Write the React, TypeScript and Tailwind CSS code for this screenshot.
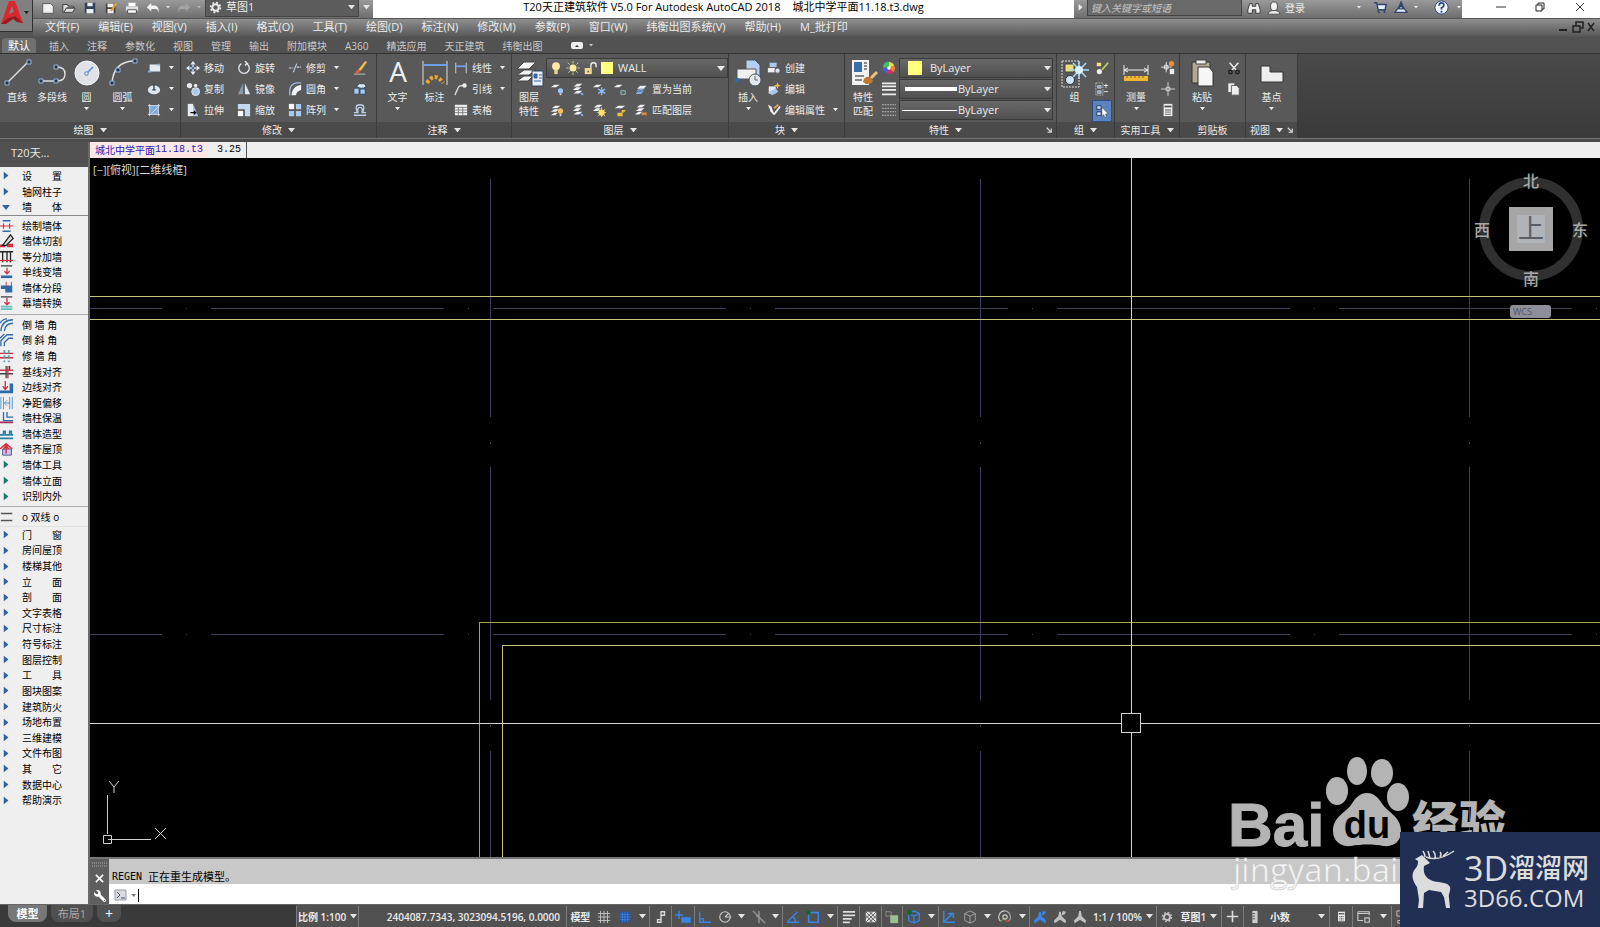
import React from "react";
import { FaWrench } from "react-icons/fa";

const blue = "#a9c8ee";

// 16x16 drawings used in the ribbon, the title bar and the status bar
const icons: Record<string, React.ReactNode> = {
  newFile: <path d="M2 3h9l3 3v8H2z" fill="#f2f2f2" stroke="#555" />,
  open: <path d="M1 13V4h5l1 2h6v2H5l-3 5h10l3-5H5" fill="#ddd" stroke="#333" />,
  save: (
    <g>
      <path d="M2 2h12v12H2z" fill="#33415c" />
      <path d="M5 2h6v4H5zM4 9h8v5H4z" fill="#eee" />
    </g>
  ),
  saveAs: (
    <g>
      <path d="M2 3h11v11H2z" fill="#444" />
      <path d="M4 3h7v4H4zM4 9h7v5H4z" fill="#eee" />
      <path d="M7 11l6-9 2 1-6 9z" fill="#f0a030" />
    </g>
  ),
  print: (
    <g>
      <path d="M4 2h8v4H4z" fill="#fff" />
      <path d="M1 6h14v5H1z" fill="#ddd" />
      <path d="M3 10h10v4H3z" fill="#fff" stroke="#444" />
    </g>
  ),
  undo: <path d="M6 2L1 7l5 5V9h5q3 0 3 5 2-8-4-9H6z" fill="#f2f2f2" />,
  redo: <path d="M10 2l5 5-5 5V9H5q-3 0-3 5-2-8 4-9h4z" fill="#a4a4a4" />,
  gear: (
    <g fill="none" stroke="currentColor">
      <circle cx="8" cy="8" r="4" strokeWidth="2.5" />
      <circle cx="8" cy="8" r="6" strokeWidth="2" strokeDasharray="2.4 2.31" />
    </g>
  ),
  rect: (
    <g>
      <path d="M3 4h12v8H3z" fill="#e4eaf2" />
      <path d="M1 12h4M12 4h3" stroke="#7fb0e8" strokeWidth="2" />
    </g>
  ),
  ellipse: (
    <g>
      <ellipse cx="8" cy="9" rx="7" ry="5" fill="#dfe6ee" />
      <path d="M6 9h4M8 2v7" stroke="#345" strokeWidth="1.5" />
    </g>
  ),
  hatchBox: (
    <g>
      <path d="M3 3h10v10H3z" fill="#7fa8dc" />
      <path d="M1 3h14M1 13h14M3 1v14M13 1v14M5 12l7-7" stroke="#dbe8f8" />
    </g>
  ),
  move: (
    <g>
      <path d="M8 0l3 4H5zM8 16l3-4H5zM0 8l4-3v6zM16 8l-4-3v6z" fill="#e8eef6" />
      <path d="M8 4v3M8 9v3M4 8h3M9 8h3" stroke={blue} strokeWidth="2" />
    </g>
  ),
  rotate: (
    <g fill="none" stroke="#dfe6ee" strokeWidth="1.5">
      <path d="M10 2.500A6 6 0 1 1 5 3" />
      <path d="M9 0l3 3-3 2" />
    </g>
  ),
  trim: (
    <g stroke="#d8d8d8" strokeWidth="1.4">
      <path d="M1 8h5M10 7h5" strokeDasharray="3 1" />
      <path d="M6 13L10 3" stroke={blue} />
    </g>
  ),
  erase: (
    <g>
      <path d="M6 10l8-10 2 1-7 10z" fill="#f0c050" />
      <path d="M2 13l4-4 3 2-3 3z" fill="#e06040" />
      <path d="M1 15h13" stroke="#ccc" />
    </g>
  ),
  copy: (
    <g fill="#e8ebf0">
      <circle cx="4" cy="4" r="3" />
      <circle cx="11" cy="4" r="2" />
      <circle cx="11" cy="11" r="4.500" fill={blue} stroke="#eee" />
    </g>
  ),
  mirror: (
    <g>
      <path d="M7 1v13H1z" fill="#8899aa" />
      <path d="M9 1v13h6z" fill="#dbe8f8" />
    </g>
  ),
  fillet: (
    <g>
      <path d="M2 15V9q1-7 8-8h5" fill="none" stroke="#9cb8dc" strokeWidth="1.500" />
      <path d="M4 15q0-10 11-12v6q-5 1-6 6z" fill="#f0f2f5" />
    </g>
  ),
  explode: (
    <g stroke="#345">
      <path d="M1 7h6v7H1zM8 8h6v6H8z" fill={blue} />
      <path d="M4 5l3-3h6l2 3-3 2H8z" fill="#dbe8f8" />
    </g>
  ),
  stretch: (
    <g>
      <path d="M2 1h6v14H2z" fill="#e8ebf0" />
      <path d="M8 1l6 14H8z" fill={blue} />
      <path d="M5 11h6l-2-2m2 2l-2 2" stroke="#111" fill="none" strokeWidth="1.500" />
    </g>
  ),
  scale: (
    <g>
      <path d="M1 1h14v14H9V7H1z" fill="#c5d7ee" />
      <path d="M1 9h6v6H1z" fill="#fff" />
    </g>
  ),
  array: (
    <g>
      <path d="M1 1h6v6H1z" fill="#fff" />
      <path d="M9 1h6v6H9zM1 9h6v6H1zM9 9h6v6H9z" fill={blue} />
    </g>
  ),
  offset: (
    <path d="M1 14h14M1 11h4q-4-9 3-9t3 9h4M6 11q-2-6 2-6t2 6" fill="none" stroke="#b8cfee" strokeWidth="1.500" />
  ),
  dimLinear: (
    <g stroke="#ddd">
      <path d="M2 2v12M14 2v12" />
      <path d="M2 6h12" stroke="#6ca0ee" strokeWidth="2" />
    </g>
  ),
  leader: (
    <g>
      <path d="M1 15L5 6q1-2 6-2" fill="none" stroke="#ddd" strokeWidth="1.500" />
      <circle cx="12" cy="4" r="2.500" fill="#eee" />
    </g>
  ),
  table: (
    <g>
      <path d="M1 2h14v12H1z" fill="#f0f0f0" />
      <path d="M1 5h14M1 8h14M1 11h14M5 5v9M10 5v9" stroke="#777" />
    </g>
  ),
  layerBulb: (
    <g>
      <path d="M1 6l4-3h6l-4 3z" fill="#f0f0f0" />
      <circle cx="12" cy="10" r="3" fill="#9cc4f4" />
      <path d="M11 13h2v2h-2z" fill="#ddd" />
    </g>
  ),
  layerStack: (
    <g fill="#f0f0f0">
      <path d="M3 5l4-3h6L9 5zM2 9l4-3h6L8 9zM3 13l4-3h6l-4 3z" />
      <path d="M10 11l5 3-3 1z" fill="#7fb0f0" />
    </g>
  ),
  layerFreeze: (
    <g>
      <path d="M1 6l4-3h6L7 6z" fill="#f0f0f0" />
      <path d="M11 6v9M7 8l8 5M15 8l-8 5" stroke="#8fc0ff" strokeWidth="1.500" />
    </g>
  ),
  layerLock: (
    <g>
      <path d="M1 6l4-3h6L7 6z" fill="#f0f0f0" />
      <path d="M9 10h5v4H9z" fill="none" stroke="#9cc" />
    </g>
  ),
  layerCurrent: (
    <g stroke="#345" strokeWidth="0.500">
      <path d="M1 14l4-4h7l-4 4zM2 11l4-4h7l-4 4z" fill="#8fb8ee" />
      <path d="M3 8l4-4h8l-4 4z" fill="#f0f0f0" />
    </g>
  ),
  layerOn: (
    <g fill="#f0f0f0">
      <path d="M2 6l4-3h6L8 6zM1 10l4-3h5l-3 3zM1 14l4-3h4l-3 3z" />
      <circle cx="12" cy="9" r="3" fill="#f4c060" />
      <path d="M11 12h2v3h-2z" fill="#ddd" />
    </g>
  ),
  layerSun: (
    <g>
      <path d="M2 5l4-3h6L8 5zM1 9l4-3h5L7 9z" fill="#f0f0f0" />
      <circle cx="11" cy="11" r="3.500" fill="#ffe070" />
      <path d="M11 5v11M6 11h10M7 7l8 8M15 7l-8 8" stroke="#ffe070" />
    </g>
  ),
  layerUnlock: (
    <g>
      <path d="M2 6l4-3h8l-4 3z" fill="#f0f0f0" />
      <path d="M5 11h6v4H5zM10 11V8h4v2h-2v1z" fill="#f0c040" />
    </g>
  ),
  layerMatch: (
    <g>
      <path d="M3 5l4-3h6L9 5zM2 9l4-3h6L8 9zM1 13l4-3h5l-4 3z" fill="#f0f0f0" />
      <path d="M8 10l3 1 3-1 1 4H9z" fill="#d08840" />
    </g>
  ),
  bulb: (
    <g>
      <circle cx="8" cy="6" r="4.500" fill="#ffe9a0" />
      <path d="M6 10h4v5H6z" fill="#e8d090" />
    </g>
  ),
  sun: (
    <g>
      <circle cx="8" cy="8" r="4" fill="#ffe9a0" />
      <path d="M8 0v16M0 8h16M2 2l12 12M14 2L2 14" stroke="#d8cfa0" strokeDasharray="3 10 3" />
    </g>
  ),
  unlock: (
    <g>
      <path d="M2 8h8v7H2z" fill="#f4dc90" />
      <path d="M9 8V5q0-3 3-3t3 3v2" fill="none" stroke="#eee" strokeWidth="1.500" />
      <path d="M5 11h2v2H5z" fill="#665" />
    </g>
  ),
  blockCreate: (
    <g>
      <path d="M3 2h8v5H3z" fill={blue} />
      <path d="M1 8h8v5H1z" fill="#eee" />
      <circle cx="12" cy="11" r="3" fill="#dde4ee" stroke="#456" />
    </g>
  ),
  blockEdit: (
    <g>
      <path d="M2 5h8v8H2z" fill="#e8ebf0" />
      <path d="M1 12l5 3 7-4-3-4z" fill={blue} />
      <path d="M12 0l1 3 3 1-3 1-1 3-1-3-3-1 3-1z" fill="#f8c040" />
    </g>
  ),
  blockAttr: (
    <g>
      <path d="M1 2l4 2 3 8-4-3z" fill="#eee" />
      <path d="M8 13L4 8M8 13l7-9" stroke="#f0f0f0" strokeWidth="2" />
      <path d="M8 6l5-4" stroke="#e8a050" strokeWidth="2" />
    </g>
  ),
  wheel: (
    <g>
      <path d="M8 8L8 1a7 7 0 0 1 6 4z" fill="#e8e050" />
      <path d="M8 8l6-3a7 7 0 0 1-1 8z" fill="#f08030" />
      <path d="M8 8l5 5a7 7 0 0 1-8 1z" fill="#d03060" />
      <path d="M8 8l-3 6a7 7 0 0 1-4-7z" fill="#4060e0" />
      <path d="M8 8L1 7a7 7 0 0 1 7-6z" fill="#40c060" />
      <circle cx="8" cy="8" r="2" fill="#fff" />
    </g>
  ),
  lineWeight: <path d="M0 1.500h16M0 5h16M0 9h16M0 14h16" stroke="#eee" strokeWidth="2" />,
  lineType: <path d="M0 2h16M0 6h16M0 10h16M0 14h16" stroke="#ccc" strokeDasharray="2 1" />,
  groupEdit: (
    <g>
      <path d="M2 2h5v4H2z" fill="#eee080" />
      <circle cx="5" cy="12" r="3" fill="#eee" />
      <path d="M8 10l7-8" stroke="#c8d060" strokeWidth="2" />
    </g>
  ),
  groupAdd: (
    <g fill="none" stroke="#bbb">
      <path d="M1 1h8v14H1z" strokeDasharray="2 1" />
      <path d="M3 4h4v3H3zM3 10h4v3H3z" fill="#88a8d8" />
      <path d="M10 4h5M12.500 2v5M10 11h5" stroke="#eee" />
    </g>
  ),
  groupSelect: (
    <g>
      <path d="M2 2h5v4H2zM2 9h5v4H2z" fill="#cfe0f8" stroke="#234" />
      <path d="M8 4l7 7-3 .5 1 3-2 .5-1-3-2 2z" fill="#fff" stroke="#234" strokeWidth=".5" />
    </g>
  ),
  quickSelect: (
    <g>
      <path d="M6 1v12M0 7h12" stroke="#eee" />
      <path d="M4 5h4v4H4z" fill="none" stroke="#eee" />
      <circle cx="12" cy="3" r="3" fill="#f09030" />
      <path d="M10 9h5v6h-5z" fill="#eee" />
    </g>
  ),
  point: (
    <g stroke="#ddd" fill="none">
      <path d="M8 0v16M0 8h16" />
      <path d="M6 6h4v4H6z" fill="#999" />
    </g>
  ),
  calc: (
    <g>
      <path d="M3 1h10v14H3z" fill="#eee" />
      <path d="M4 4h8" stroke="#555" strokeWidth="2" />
      <path d="M5 8h6M5 10.500h6M5 13h6" stroke="#555" strokeDasharray="1.500 .8" strokeWidth="1.500" />
    </g>
  ),
  cut: (
    <g stroke="#eee" strokeWidth="1.700" fill="none">
      <path d="M3 2l8 9M13 2l-8 9" />
      <circle cx="4" cy="12.500" r="2" stroke="#222" />
      <circle cx="12" cy="12.500" r="2" stroke="#222" />
    </g>
  ),
  pages: (
    <g fill="#eee" stroke="#555">
      <path d="M1 1h8v11H1z" />
      <path d="M5 4h6l3 3v8H5z" />
    </g>
  ),
  binoculars: (
    <path d="M3 3h3v3h4V3h3l2 7v4h-5v-4H6v4H1v-4z" fill="#eee" stroke="#333" />
  ),
  person: (
    <g fill="#f0f0f0" stroke="#444">
      <path d="M1 15q1-4 5-4h4q4 0 5 4z" />
      <ellipse cx="8" cy="6" rx="4" ry="5" />
    </g>
  ),
  cart: (
    <g>
      <path d="M4 4h10l-1 6H6z" fill="#e8eef8" />
      <path d="M1 2h3l2 8h8l1-6H5M6 13h2M12 13h2M6 10v3M13 10v3" fill="none" stroke="#32466e" strokeWidth="1.600" />
    </g>
  ),
  a360: <path d="M8 1l3 7 4 5H1l4-5zM8 4l2 5H6z" fill="#e8eef8" stroke="#32466e" strokeWidth="1.500" />,
  help: (
    <g>
      <circle cx="8" cy="8" r="7" fill="#f4f6fa" stroke="#2c4a86" />
      <path d="M5.500 6q0-3 2.500-3t2.500 2.200T8 8.500V10M8 11.500v2" fill="none" stroke="#2c4a86" strokeWidth="2" />
    </g>
  ),
  // status bar
  grid: <path d="M4 1v14M8 1v14M12 1v14M1 4h14M1 8h14M1 12h14" stroke="#c8c8c8" />,
  snap: (
    <g>
      <path d="M2 2h12v12H2z" fill="#24509a" />
      <path d="M5 2v12M8 2v12M11 2v12M2 5h12M2 8h12M2 11h12" stroke="#3f7fe0" />
    </g>
  ),
  infer: <path d="M8 2h4v4H8zM8 4v9M4 11h4v3H4z" fill="none" stroke="#ddd" strokeWidth="1.500" />,
  dyn: <path d="M4 2v8M0 6h8M7 9h8v4H7z" fill="#3a86e8" stroke="#3a86e8" strokeWidth="1.500" />,
  ortho: <path d="M2 2v12h13M2 10h4v4" fill="none" stroke="#3a86e8" strokeWidth="1.500" />,
  polar: (
    <g fill="none" stroke="#ccc" strokeWidth="1.300">
      <circle cx="8" cy="8" r="6" />
      <path d="M8 8h7M8 8l4-4" />
    </g>
  ),
  iso: <path d="M1 1l14 14M8 1v14M5 6l3 3" stroke="#999" strokeWidth="1.500" />,
  angle: <path d="M1 14h14M2 13L13 2M8 8q3 2 3 6" fill="none" stroke="#3a86e8" strokeWidth="1.500" />,
  osnap: (
    <g>
      <path d="M3 3h11v11H3z" fill="none" stroke="#3a86e8" strokeWidth="1.800" />
      <circle cx="3" cy="3" r="2.500" fill="#0a6a2a" />
    </g>
  ),
  weight: <path d="M1 2h14M1 6h14M1 10h10M1 14h8" stroke="#ddd" strokeWidth="2" />,
  trans: (
    <g>
      <path d="M1 1h14v14H1z" fill="#ddd" />
      <path d="M1 1l14 14M1 6l9 9M6 1l9 9M15 1L1 15M10 1l-9 9M15 6l-9 9" stroke="#444" />
    </g>
  ),
  cycle: (
    <g>
      <path d="M1 2h6v5H1z" fill="none" stroke="#aaa" strokeDasharray="2 1" />
      <path d="M6 6h9v9H6z" fill="#9cc090" />
    </g>
  ),
  cube3d: (
    <g fill="none" stroke="#3a86e8" strokeWidth="1.500">
      <path d="M8 1l6 3v8l-6 3-6-3V4zM2 4l6 3 6-3M8 7v8" />
      <circle cx="3" cy="3" r="2" fill="#0a6a2a" stroke="#0a6a2a" />
    </g>
  ),
  ucs: <path d="M2 1v13h13M2 14l9-9M7 4h6v5" fill="none" stroke="#3a86e8" strokeWidth="1.700" />,
  cube: <path d="M8 1l6 3v8l-6 3-6-3V4zM2 4l6 3 6-3M8 7v8" fill="none" stroke="#aaa" />,
  gizmo: (
    <g fill="none" strokeWidth="1.300">
      <path d="M3 13A7 7 0 0 1 8 1" stroke="#ccc" />
      <path d="M8 1a7 7 0 0 1 4 12" stroke="#aaa" />
      <path d="M3 13l5-4" stroke="#5aa05a" />
      <path d="M13 12q-4 3-5-3" stroke="#d05050" />
      <circle cx="8" cy="8" r="2.500" stroke="#ccc" />
    </g>
  ),
  anno: <path d="M7 1h2l1 6 5 5-1 3-6-4-6 4-1-3 5-5z" fill="currentColor" />,
  annoAuto: <path d="M7 2h2l1 5 5 5-1 3-6-4-6 4-1-3 5-5zM11 1l4 1-2 3-3 1z" fill="currentColor" />,
  plus: <path d="M8 1v14M1 8h14" stroke="#ddd" strokeWidth="2" />,
  ruler: (
    <g>
      <path d="M5 1h6v14H5z" fill="#ccc" />
      <path d="M5 4h3M5 7h3M5 10h3" stroke="#555" />
    </g>
  ),
  ui: <path d="M1 2h13v4M1 2v10h6M1 4h13M9 9h5v5H9z" fill="none" stroke="#ccc" strokeWidth="1.300" />,
  isolate: <path d="M1 1h6v6H1zM9 13l4-6 3 6zM2 12h5v3H2z" fill="none" stroke="#ccc" />,
};

function Icon({ name, className = "size-[14px]" }: { name: string; className?: string }) {
  return (
    <svg viewBox="0 0 16 16" className={`shrink-0 ${className}`} aria-hidden="true">
      {icons[name]}
    </svg>
  );
}

function Caret({ className = "w-[7px] text-[#e4e4e4]" }: { className?: string }) {
  return (
    <svg viewBox="0 0 8 5" className={`shrink-0 ${className}`} aria-hidden="true">
      <path d="M0 0h8L4 5z" fill="currentColor" />
    </svg>
  );
}

function Tool({ icon, label, caret = false }: { icon: string; label?: string; caret?: boolean }) {
  return (
    <button className="flex h-5 items-center gap-1 whitespace-nowrap" aria-label={label ?? icon}>
      <Icon name={icon} />
      {label}
      {caret && <Caret className="ml-1 w-[5px]" />}
    </button>
  );
}

interface BigToolProps {
  label: string;
  second?: string;
  caret?: boolean;
  className: string;
  children: React.ReactNode;
}

function BigTool({ label, second, caret = false, className, children }: BigToolProps) {
  return (
    <button className={`flex flex-col items-center self-start ${className}`}>
      <svg viewBox="0 0 32 32" className="size-8" aria-hidden="true">
        {children}
      </svg>
      <span className="pt-px whitespace-nowrap">{label}</span>
      {second && <span className="whitespace-nowrap">{second}</span>}
      {caret && <Caret className="mt-[3px] w-[5px]" />}
    </button>
  );
}

interface PanelProps {
  title: string;
  className: string;
  caret?: boolean;
  launcher?: boolean;
  children: React.ReactNode;
}

function Panel({ title, className, caret = true, launcher = false, children }: PanelProps) {
  return (
    <section className={`flex shrink-0 flex-col border-r border-[#3c3c3c] bg-[#595959] ${className}`}>
      <div className="flex flex-1 pt-[3px]">{children}</div>
      <div className="flex h-4 items-center bg-[#4a4a4a]">
        <button className="flex flex-1 items-center justify-center gap-[6px]">
          {title}
          {caret && <Caret />}
        </button>
        {launcher && (
          <svg viewBox="0 0 8 8" className="mr-1 size-[6px]" aria-hidden="true">
            <path d="M1 1l5 5M7 2v5H2" stroke="#ddd" strokeWidth="1.500" fill="none" />
          </svg>
        )}
      </div>
    </section>
  );
}

function Col({ className = "", children }: { className?: string; children: React.ReactNode }) {
  return <div className={`flex flex-col gap-px pt-px ${className}`}>{children}</div>;
}

function PropSelect({ label, value, children }: { label: string; value: string; children: React.ReactNode }) {
  return (
    <label className="flex h-5 items-center border border-[#3a3a3a] bg-gradient-to-b from-[#686868] to-[#505050] pr-px">
      {children}
      <select aria-label={label} className="min-w-0 flex-1 appearance-none text-[11px] outline-none">
        <option>{value}</option>
      </select>
      <Caret />
    </label>
  );
}

const menus = [
  "文件(F)", "编辑(E)", "视图(V)", "插入(I)", "格式(O)", "工具(T)", "绘图(D)", "标注(N)",
  "修改(M)", "参数(P)", "窗口(W)", "纬衡出图系统(V)", "帮助(H)", "M_批打印",
];

const tabs = [
  "插入", "注释", "参数化", "视图", "管理", "输出", "附加模块", "A360", "精选应用", "天正建筑", "纬衡出图",
];

function TitleBar() {
  return (
    <div className="flex h-[18px] bg-gradient-to-b from-[#9a9a9a] to-[#6e6e6e]">
      <div className="flex items-center gap-[7px] pb-[3px] pl-[8px]">
        {["newFile", "open", "save", "saveAs", "print"].map((n) => (
          <button key={n} aria-label={n}>
            <Icon name={n} />
          </button>
        ))}
        <button className="flex items-center gap-[6px]" aria-label="undo">
          <Icon name="undo" />
          <Caret className="w-[4px] text-[#ddd]" />
        </button>
        <button className="flex items-center gap-[6px]" aria-label="redo">
          <Icon name="redo" />
          <Caret className="w-[4px] text-[#bbb]" />
        </button>
      </div>
      <label className="ml-1 flex h-[17px] w-[154px] items-center gap-1 border-x border-b border-[#444] bg-[#5c5c5c] px-[3px] pb-[2px]">
        <Icon name="gear" className="size-[13px]" />
        <select aria-label="工作空间" className="flex-1 appearance-none text-[11px]/[14px] outline-none">
          <option>草图1</option>
        </select>
        <Caret />
      </label>
      <button className="flex w-[14px] items-center justify-center pb-[3px]" aria-label="自定义">
        <Caret />
      </button>
      <h1 className="flex flex-1 items-center justify-center gap-3 bg-white pb-[4px] text-[11px]/[14px] whitespace-nowrap text-black">
        <span>T20天正建筑软件 V5.0 For Autodesk AutoCAD 2018</span>
        <span>城北中学平面11.18.t3.dwg</span>
      </h1>
      <div className="flex w-[388px] items-center pb-[3px]">
        <Caret className="mx-[3px] w-[7px] -rotate-90 text-[#eee]" />
        <input
          aria-label="搜索"
          placeholder="键入关键字或短语"
          className="h-[17px] w-[155px] border border-[#444] bg-[#6a6a6a] px-[3px] text-[10px] italic outline-none placeholder:text-[#c4c4c4]"
        />
        <button className="ml-[5px]" aria-label="查找"><Icon name="binoculars" /></button>
        <button className="ml-[6px] flex items-center gap-1">
          <Icon name="person" />
          登录
        </button>
        <Caret className="ml-[52px] w-[4px]" />
        <button className="ml-[12px]" aria-label="商店"><Icon name="cart" /></button>
        <button className="ml-[7px] flex items-center gap-[6px]" aria-label="A360">
          <Icon name="a360" />
          <Caret className="w-[4px]" />
        </button>
        <button className="ml-[16px] flex items-center gap-2" aria-label="帮助">
          <Icon name="help" className="size-[15px]" />
          <Caret className="w-[4px]" />
        </button>
      </div>
      <div className="flex w-[138px] items-center justify-around bg-white pb-[4px] pl-[19px]">
        <button aria-label="最小化">
          <svg viewBox="0 0 10 10" className="size-[10px]"><path d="M0 5h10" stroke="#333" /></svg>
        </button>
        <button aria-label="还原">
          <svg viewBox="0 0 10 10" className="size-[10px]">
            <path d="M1 3h6v6H1zM3 3V1h6v6H7" fill="none" stroke="#222" />
          </svg>
        </button>
        <button aria-label="关闭">
          <svg viewBox="0 0 10 10" className="size-[10px]"><path d="M1 1l8 8M9 1L1 9" stroke="#333" /></svg>
        </button>
      </div>
    </div>
  );
}

function MenuBar() {
  return (
    <nav className="flex h-[19px] items-center border-y border-[#555] bg-gradient-to-b from-[#8f8f8f] to-[#5a5a5a] pr-[3px] pb-px pl-3">
      <div className="flex flex-1 gap-x-[19px]">
        {menus.map((m) => (
          <button key={m} className="text-[11px]/[14px] whitespace-nowrap">
            {m}
          </button>
        ))}
      </div>
      <svg viewBox="0 0 40 12" className="h-3 w-10" aria-hidden="true">
        <path d="M2 9h8" stroke="#222" strokeWidth="2" />
        <path d="M16 5h7v6h-7zM19 5V1h7v6h-3M31 2l6 8M37 2l-6 8" stroke="#222" strokeWidth="1.500" fill="none" />
      </svg>
    </nav>
  );
}

function Ribbon() {
  return (
    <div className="flex h-[84px] bg-gradient-to-b from-[#4a4a4a] to-[#3a3a3a]">
      <Panel title="绘图" className="w-[181px]">
        <BigTool label="直线" className="w-[34px]">
          <path d="M6 26L28 4" stroke="#ddd" strokeWidth="1.500" />
          <path d="M4 24h4v4H4zM26 3h4v4h-4z" fill="#333" stroke="#8fb8f4" />
        </BigTool>
        <BigTool label="多段线" className="w-9">
          <path d="M5 24h16q8 0 8-7t-8-7" fill="none" stroke="#ddd" strokeWidth="1.500" />
          <path d="M3 22h4v4H3zM18 8h4v4h-4zM18 22h4v4h-4z" fill="#333" stroke="#8fb8f4" />
        </BigTool>
        <BigTool label="圆" caret className="w-[33px]">
          <circle cx="16" cy="16" r="12" fill="#dfe3e8" stroke="#f8f8f8" />
          <path d="M16 16l6-6" stroke="#5588cc" strokeWidth="1.500" />
          <path d="M14 15h3v3h-3z" fill="#fff" stroke="#5588cc" />
        </BigTool>
        <BigTool label="圆弧" caret className="w-[39px]">
          <path d="M5 27Q6 4 28 4" fill="none" stroke="#ddd" strokeWidth="1.500" />
          <path d="M3 24h4v4H3zM9 11h4v4H9zM26 2h4v4h-4z" fill="#333" stroke="#8fb8f4" />
        </BigTool>
        <Col className="pl-[5px]">
          <Tool icon="rect" caret />
          <Tool icon="ellipse" caret />
          <Tool icon="hatchBox" caret />
        </Col>
      </Panel>

      <Panel title="修改" className="w-[196px]">
        <Col className="w-[51px] pl-[5px]">
          <Tool icon="move" label="移动" />
          <Tool icon="copy" label="复制" />
          <Tool icon="stretch" label="拉伸" />
        </Col>
        <Col className="w-[51px] pl-[5px]">
          <Tool icon="rotate" label="旋转" />
          <Tool icon="mirror" label="镜像" />
          <Tool icon="scale" label="缩放" />
        </Col>
        <Col className="w-[65px] pl-[5px]">
          <Tool icon="trim" label="修剪" caret />
          <Tool icon="fillet" label="圆角" caret />
          <Tool icon="array" label="阵列" caret />
        </Col>
        <Col className="pl-[5px]">
          <Tool icon="erase" />
          <Tool icon="explode" />
          <Tool icon="offset" />
        </Col>
      </Panel>

      <Panel title="注释" className="w-[135px]">
        <BigTool label="文字" caret className="w-[41px]">
          <text x="16" y="25" textAnchor="middle" fontSize="28" fill="#f0f0f0">A</text>
        </BigTool>
        <BigTool label="标注" className="w-[33px]">
          <path d="M4 4v24M28 4v24" stroke="#ddd" />
          <path d="M4 8h24" stroke="#6ca0ee" strokeWidth="2" />
          <path d="M8 26q8-12 16 0" fill="none" stroke="#f0a830" strokeWidth="4" strokeDasharray="3 2" />
        </BigTool>
        <Col className="pl-[3px]">
          <Tool icon="dimLinear" label="线性" caret />
          <Tool icon="leader" label="引线" caret />
          <Tool icon="table" label="表格" />
        </Col>
      </Panel>

      <Panel title="图层" className="w-[217px]">
        <BigTool label="图层" second="特性" className="w-[34px]">
          <path d="M4 12l7-7h12l-7 7zM4 18l7-5h12l-7 5zM4 24l7-5h9l-5 5z" fill="#f4f4f4" stroke="#444" />
          <path d="M19 14h11v15H19z" fill="#e8eef8" stroke="#345" />
          <path d="M21 17h3v4h-3zM26 18h3M26 21h3M21 24h7" stroke="#3a66b0" fill="#3a66b0" />
        </BigTool>
        <Col className="flex-1">
          <label className="flex h-5 items-center gap-[3px] border border-[#3a3a3a] bg-gradient-to-b from-[#686868] to-[#505050] px-[2px]">
            <Icon name="bulb" />
            <Icon name="sun" />
            <Icon name="unlock" />
            <span className="ml-px size-[12px] bg-[#ffff80]" />
            <select aria-label="图层" className="ml-[2px] flex-1 appearance-none text-[11px] outline-none">
              <option>WALL</option>
            </select>
            <Caret className="w-[8px]" />
          </label>
          <div className="flex gap-[7px] pl-1">
            <Tool icon="layerBulb" />
            <Tool icon="layerStack" />
            <Tool icon="layerFreeze" />
            <Tool icon="layerLock" />
            <Tool icon="layerCurrent" label="置为当前" />
          </div>
          <div className="flex gap-[7px] pl-1">
            <Tool icon="layerOn" />
            <Tool icon="layerStack" />
            <Tool icon="layerSun" />
            <Tool icon="layerUnlock" />
            <Tool icon="layerMatch" label="匹配图层" />
          </div>
        </Col>
      </Panel>

      <Panel title="块" className="w-[116px]">
        <BigTool label="插入" caret className="w-[38px]">
          <path d="M14 3h9l5 5v14H14z" fill="#b8d0f0" stroke="#456" />
          <path d="M5 12h19v10H5z" fill="#f0f0f0" stroke="#555" />
          <circle cx="23" cy="23" r="6" fill="#e4e8ee" stroke="#456" />
          <path d="M23 19v4h3" stroke="#567" fill="none" />
          <path d="M3 21h4v4H3z" fill="#3a66b0" />
        </BigTool>
        <Col>
          <Tool icon="blockCreate" label="创建" />
          <Tool icon="blockEdit" label="编辑" />
          <Tool icon="blockAttr" label="编辑属性" caret />
        </Col>
      </Panel>

      <Panel title="特性" launcher className="w-[212px]">
        <BigTool label="特性" second="匹配" className="w-9">
          <path d="M5 3h17v25H5z" fill="#f2f2f2" />
          <path d="M7 5h8v10H7z" fill="#3a6ea8" />
          <path d="M17 6h3M17 9h3M17 12h3M8 19h9M8 23h7" stroke="#666" strokeWidth="1.500" />
          <path d="M16 25q1-6 7-5l3 4q-4 6-10 1z" fill="#c07830" />
          <path d="M24 21l6-6" stroke="#f0c080" strokeWidth="3" />
        </BigTool>
        <Col className="w-[18px] pl-px">
          <Tool icon="wheel" />
          <Tool icon="lineWeight" />
          <Tool icon="lineType" />
        </Col>
        <Col className="min-w-0 flex-1 pr-[3px]">
          <PropSelect label="颜色" value="ByLayer">
            <span className="mx-2 size-[14px] bg-[#ffff80]" />
          </PropSelect>
          <PropSelect label="线宽" value="ByLayer">
            <span className="mr-px ml-[5px] h-[4px] w-[52px] bg-white" />
          </PropSelect>
          <PropSelect label="线型" value="ByLayer">
            <span className="mr-px ml-[2px] h-px w-[55px] bg-white" />
          </PropSelect>
        </Col>
      </Panel>

      <Panel title="组" className="w-[58px]">
        <BigTool label="组" className="w-[35px]">
          <path d="M3 4h17v26H3z" fill="none" stroke="#ddd" strokeDasharray="2 1" />
          <path d="M6 7h9v8H6z" fill="#e8e080" stroke="#444" />
          <circle cx="11" cy="23" r="4.500" fill="#cfe4f4" stroke="#234" />
          <path d="M20 4v18M11 13h19M14 6l13 14M27 6L14 20" stroke="#a8dcff" strokeWidth="1.500" />
          <circle cx="20" cy="13" r="4" fill="#d8f0ff" />
        </BigTool>
        <Col>
          <span className="pl-[3px]"><Tool icon="groupEdit" /></span>
          <span className="pl-[3px]"><Tool icon="groupAdd" /></span>
          <span className="border border-[#2c4f80] bg-[#5b83bd] px-[2px]"><Tool icon="groupSelect" /></span>
        </Col>
      </Panel>

      <Panel title="实用工具" className="w-[65px]">
        <BigTool label="测量" caret className="w-[42px]">
          <path d="M4 8v10M28 8v10M4 13h24M8 11l-4 2 4 2M24 11l4 2-4 2" stroke="#eee" fill="none" />
          <path d="M4 19h24v5H4z" fill="#f0b830" />
          <path d="M7 19v2M11 19v2M15 19v2M19 19v2M23 19v2" stroke="#865" />
        </BigTool>
        <Col className="pl-1">
          <Tool icon="quickSelect" />
          <Tool icon="point" />
          <Tool icon="calc" />
        </Col>
      </Panel>

      <Panel title="剪贴板" caret={false} className="w-[66px]">
        <BigTool label="粘贴" caret className="w-11">
          <path d="M6 5h18v21H6z" fill="#b0a890" stroke="#333" />
          <path d="M10 3h10v4H10z" fill="#eee" stroke="#444" />
          <path d="M12 10h11l4 5v14H12z" fill="#f6f6f6" stroke="#333" />
        </BigTool>
        <Col className="pl-[3px]">
          <Tool icon="cut" />
          <Tool icon="pages" />
        </Col>
      </Panel>

      <Panel title="视图" launcher className="w-[52px]">
        <BigTool label="基点" caret className="w-[51px]">
          <path d="M5 9h9v6h13v10H5z" fill="#eee" stroke="#333" />
        </BigTool>
      </Panel>
    </div>
  );
}

interface SideItem {
  label: string;
  icon?: React.ReactNode;
}

const R = "#d03040";
const B = "#2f6aa8";
const wallTools: SideItem[] = [
  { label: "绘制墙体", icon: <g><path d="M3 2h9M3 14h9" stroke={B} strokeWidth="1.500" /><path d="M0 8h15M4 5v6M11 5v6" stroke={R} strokeWidth="1.300" /></g> },
  { label: "墙体切割", icon: <g><path d="M0 12h6v3H0zM8 11h7v4H8z" fill={R} /><path d="M3 13L12 1l3 4-8 8z" fill="#ddd" stroke="#222" strokeWidth="1.500" /></g> },
  { label: "等分加墙", icon: <g><path d="M0 2h15M3 2v12M8 2v12M12 2v12" stroke="#222" strokeWidth="1.500" /><path d="M0 12h15" stroke={R} strokeWidth="1.500" /></g> },
  { label: "单线变墙", icon: <g><path d="M1 1h13" stroke="#444" strokeWidth="1.500" /><path d="M8 3v7M5 7l3 3 3-3" stroke={R} fill="none" strokeWidth="1.500" /><path d="M1 12h13v3H1z" fill={B} /></g> },
  { label: "墙体分段", icon: <g><path d="M1 5h13v4H1zM6 9h8v4H6z" fill={B} /><path d="M7 1v6M13 1v6" stroke={R} /></g> },
  { label: "幕墙转换", icon: <g><path d="M1 1h13" stroke="#444" strokeWidth="1.500" /><path d="M8 2v8M5 7l3 3 3-3" stroke={R} fill="none" strokeWidth="1.500" /><path d="M1 12h13M1 15h13" stroke="#60c0c0" strokeWidth="2" /></g> },
];
const editTools: SideItem[] = [
  { label: "倒 墙 角", icon: <path d="M1 15Q2 2 15 2M5 15Q6 6 15 6M0 6Q3 1 8 1" stroke={B} fill="none" strokeWidth="1.500" /> },
  { label: "倒 斜 角", icon: <path d="M1 15V9l7-7h7M5 15v-4l5-5h5M0 6l5-5" stroke={B} fill="none" strokeWidth="1.500" /> },
  { label: "修 墙 角", icon: <g><path d="M0 5h15M0 10h15" stroke={R} strokeWidth="1.500" /><path d="M5 1v14M10 1v14" stroke="#60a0b0" strokeWidth="2" strokeDasharray="4 2" /></g> },
  { label: "基线对齐", icon: <g><path d="M7 1v14M11 1v5M0 10h15" stroke="#444" strokeWidth="1.500" /><path d="M0 6h15M9 1v14" stroke={R} strokeWidth="1.500" /></g> },
  { label: "边线对齐", icon: <g><path d="M0 12h15v3H0zM11 4h4v8h-4z" fill={B} /><path d="M6 1v9M3 7l3 4 3-4" stroke={R} fill="none" strokeWidth="1.500" /></g> },
  { label: "净距偏移", icon: <path d="M1 1v14M4 1v14M14 1v14M11 1v14M6 8h5M8 5L5 8l3 3" stroke="#3a90d0" fill="none" /> },
  { label: "墙柱保温", icon: <g><path d="M4 1v10h11M8 1v6h7" stroke={B} fill="none" strokeWidth="1.500" /><path d="M0 13h15" stroke="#a03060" strokeWidth="2" /></g> },
  { label: "墙体造型", icon: <path d="M0 9h4V5h2v4h5V5h2v4h2M0 13h15" stroke="#2a80a0" fill="none" strokeWidth="1.800" /> },
  { label: "墙齐屋顶", icon: <g><path d="M3 8h10v7H3z" fill="#c8c8f0" stroke="#448" /><path d="M0 8l7-6 7 6M7 13V4M4 8l3-4 3 4" stroke={R} fill="none" strokeWidth="1.700" /></g> },
];

const moreTools = ["墙体工具", "墙体立面", "识别内外"];

const mainGroups = [
  "门　　窗", "房间屋顶", "楼梯其他", "立　　面", "剖　　面", "文字表格", "尺寸标注", "符号标注", "图层控制",
  "工　　具", "图块图案", "建筑防火", "场地布置", "三维建模", "文件布图", "其　　它", "数据中心", "帮助演示",
];

function SideRow({ label, icon, arrow = "text-[#2f62a0]", open = false }: SideItem & { arrow?: string; open?: boolean }) {
  return (
    <li className="flex flex-1 items-center">
      <button className="flex items-center text-left whitespace-pre">
        <span className="flex w-[22px] items-center">
          {icon ? (
            <svg viewBox="0 0 16 16" className="size-[14px]" aria-hidden="true">{icon}</svg>
          ) : (
            <Caret className={`${open ? "" : "-rotate-90"} ml-[2px] w-[8px] ${arrow}`} />
          )}
        </span>
        {label}
      </button>
    </li>
  );
}

function SidePanel() {
  return (
    <aside className="flex w-[90px] shrink-0 flex-col border-r-2 border-[#6a6a6a] bg-[#efefef] text-black">
      <h2 className="flex h-[25px] items-center bg-[#515151] pb-1 pl-[11px] text-[11px] text-[#e8e8e8]">T20天...</h2>
      <ul className="flex h-[49px] flex-col border-b border-[#8a8a8a] pt-px">
        <SideRow label="设　　置" />
        <SideRow label="轴网柱子" />
        <SideRow label="墙　　体" open />
      </ul>
      <ul className="flex h-[99px] flex-col border-b border-[#aaa] pt-[2px] pb-[3px]">
        {wallTools.map((t) => (
          <SideRow key={t.label} {...t} />
        ))}
      </ul>
      <ul className="flex h-[192px] flex-col border-b border-[#aaa] pt-[2px] pb-[2px]">
        {editTools.map((t) => (
          <SideRow key={t.label} {...t} />
        ))}
        {moreTools.map((t) => (
          <SideRow key={t} label={t} arrow="text-[#108070]" />
        ))}
      </ul>
      <ul className="flex h-[20px] flex-col border-b border-[#e2e2e2]">
        <SideRow label="o 双线 o" icon={<path d="M1 4h13M1 12h13" stroke="#555" strokeWidth="1.500" />} />
      </ul>
      <ul className="flex h-[281px] flex-col">
        {mainGroups.map((t) => (
          <SideRow key={t} label={t} />
        ))}
      </ul>
    </aside>
  );
}

const axisX = [400, 890, 1379];

function Drawing() {
  return (
    <div className="relative min-h-0 flex-1 overflow-hidden bg-black">
      <svg className="block h-full w-full" shapeRendering="crispEdges" fill="none" aria-label="平面图">
        <g stroke="#3c3f56">
          <line x1="-161" y1="150" x2="100%" y2="150" strokeDasharray="233 24 1 24" />
          <line x1="-161" y1="476" x2="100%" y2="476" strokeDasharray="233 24 1 24" />
          {axisX.map((x) => (
            <path key={x} d={`M${x} 21V259M${x} 284v2M${x} 309V542M${x} 567v2M${x} 593V2000`} />
          ))}
        </g>
        <g stroke="#c6c47c">
          <line x1="0" y1="138" x2="100%" y2="138" />
          <line x1="0" y1="161" x2="100%" y2="161" />
          <line x1="412" y1="487" x2="100%" y2="487" />
          <line x1="412" y1="487" x2="412" y2="100%" />
        </g>
        <g stroke="#a8a44e">
          <line x1="389" y1="464" x2="100%" y2="464" />
          <line x1="389" y1="464" x2="389" y2="100%" />
        </g>
        {/* crosshair */}
        <g stroke="#d4d4d4">
          <line x1="0" y1="565" x2="100%" y2="565" />
          <line x1="1041" y1="0" x2="1041" y2="100%" />
          <rect x="1031" y="555" width="19" height="19" fill="#000" />
        </g>
      </svg>

      <div className="absolute top-[5px] left-[3px] text-[11px]/[14px] text-[#d8d8d8]">[−][俯视][二维线框]</div>

      <svg viewBox="0 0 70 70" className="absolute bottom-[9px] left-[10px] size-[70px]" fill="none" stroke="#d0d0d0">
        <path d="M7.500 56V17M8 61.500h43" />
        <path d="M3.500 57.500h8v8h-8z" />
        <path d="M9 3l5 6 5-6M14 9v6M55 50l11 11M66 50L55 61" />
      </svg>

      {/* view cube */}
      <div className="absolute top-[10px] right-[9px] h-[155px] w-[120px] text-[#a8a8a8]">
        <svg viewBox="0 0 120 155" className="h-full w-full">
          <circle cx="60" cy="61" r="47" fill="none" stroke="#303030" strokeWidth="10" />
          <rect x="38" y="39" width="44" height="44" fill="#a6a6a6" />
          <rect x="46" y="47" width="28" height="28" fill="#b0b3b8" />
          <rect x="39" y="137" width="41" height="13" rx="3" fill="#8f8f9c" />
          <g fill="currentColor" fontSize="16" textAnchor="middle" fontWeight="500">
            <text x="60" y="19">北</text>
            <text x="109" y="68">东</text>
            <text x="60" y="117">南</text>
            <text x="11" y="68">西</text>
          </g>
          <text x="60" y="70" fill="#5a5d64" fontSize="26" textAnchor="middle">上</text>
          <text x="42" y="147" fill="#55555f" fontSize="9">WCS</text>
        </svg>
      </div>
    </div>
  );
}

function CommandLine() {
  return (
    <div className="flex h-[47px] border-t-2 border-[#777] bg-white text-black">
      <div className="flex w-[19px] flex-col items-center justify-between bg-[#5e5e5e] pt-[3px] pb-[2px] text-white">
        <svg viewBox="0 0 16 5" className="w-4" aria-hidden="true">
          <path d="M0 1h16M0 4h16" stroke="#aaa" strokeDasharray="1 1" />
        </svg>
        <button aria-label="关闭">
          <svg viewBox="0 0 10 10" className="size-[9px]"><path d="M1 1l8 8M9 1L1 9" stroke="#fff" strokeWidth="1.800" /></svg>
        </button>
        <button aria-label="自定义"><FaWrench className="size-[12px] -scale-x-100" /></button>
      </div>
      <div className="flex flex-1 flex-col">
        <p className="flex h-[25px] items-end gap-[6px] bg-[#c8c8c8] px-[3px] text-[11px]/[14px]">
          <span className="font-['DejaVu_Sans_Mono',monospace] text-[10px]/[14px]">REGEN</span>
          正在重生成模型。
        </p>
        <label className="flex flex-1 items-center pt-[2px] pl-[5px]">
          <svg viewBox="0 0 24 12" className="h-3 w-6" aria-hidden="true">
            <path d="M1 1h11v10H1z" fill="#d8dce0" stroke="#99a" />
            <path d="M3 3l3 3-3 3M7 9h4" stroke="#456" fill="none" />
            <path d="M17 5h5l-2 3z" fill="#777" />
          </svg>
          <span className="h-[13px] w-px bg-black" />
          <input aria-label="命令" className="flex-1 px-1 outline-none" />
        </label>
      </div>
    </div>
  );
}

function Stat({ children, className }: { children: React.ReactNode; className: string }) {
  return (
    <div className={`flex h-full shrink-0 items-center border-l border-[#7c7c7c] whitespace-nowrap ${className}`}>
      {children}
    </div>
  );
}

function StatusBar() {
  return (
    <footer className="flex h-[23px] shrink-0 items-start border-t border-[#666] bg-[#3a3a3a]">
      <div className="flex flex-1 items-start gap-1 pl-2 text-[11px]/[17px] text-[#a8a8a8]">
        <button className="h-[17px] w-[39px] rounded-b-lg bg-[#777] font-bold text-white">模型</button>
        <button className="h-[17px] w-[42px] rounded-b-lg bg-[#505050]">布局1</button>
        <button className="h-[17px] w-[24px] rounded-b-lg bg-[#505050] text-[14px] text-white" aria-label="新建布局">+</button>
      </div>
      <div className="flex h-full w-[1304px] shrink-0 items-center bg-[#515151] pt-px font-semibold">
        <Stat className="w-[62px] justify-around"><button className="flex items-center gap-1">比例 1:100 <Caret /></button></Stat>
        <Stat className="w-[208px] justify-end pr-[6px]">2404087.7343, 3023094.5196, 0.0000</Stat>
        <Stat className="w-[83px] justify-around">
          模型
          <Icon name="grid" />
          <Icon name="snap" />
          <Caret />
        </Stat>
        <Stat className="w-[22px] justify-around"><Icon name="infer" /></Stat>
        <Stat className="w-[23px] justify-around"><Icon name="dyn" className="size-4" /></Stat>
        <Stat className="w-[88px] justify-around">
          <Icon name="ortho" />
          <Icon name="polar" />
          <Caret />
          <Icon name="iso" />
          <Caret />
        </Stat>
        <Stat className="w-[55px] justify-around">
          <Icon name="angle" />
          <Icon name="osnap" />
          <Caret />
        </Stat>
        <Stat className="w-[22px] justify-around"><Icon name="weight" /></Stat>
        <Stat className="w-[22px] justify-around"><Icon name="trans" className="size-[12px]" /></Stat>
        <Stat className="w-[21px] justify-around"><Icon name="cycle" /></Stat>
        <Stat className="w-9 justify-around">
          <Icon name="cube3d" />
          <Caret />
        </Stat>
        <Stat className="w-[91px] justify-around">
          <Icon name="ucs" />
          <Icon name="cube" />
          <Caret />
          <Icon name="gizmo" />
          <Caret />
        </Stat>
        <Stat className="w-[127px] justify-around">
          <Icon name="annoAuto" className="size-[14px] text-[#3a86e8]" />
          <Icon name="annoAuto" className="size-[14px] text-[#c0c0c0]" />
          <Icon name="anno" className="size-[14px] text-[#c0c0c0]" />
          <button className="flex items-center gap-1">1:1 / 100% <Caret /></button>
        </Stat>
        <Stat className="w-[65px] justify-around">
          <Icon name="gear" className="size-3 text-[#c4c4c4]" />
          <button className="flex items-center gap-1">草图1 <Caret /></button>
        </Stat>
        <Stat className="w-[22px] justify-around"><Icon name="plus" className="size-[13px]" /></Stat>
        <Stat className="w-[86px] justify-around">
          <Icon name="ruler" />
          <button className="flex items-center gap-7">小数 <Caret /></button>
        </Stat>
        <Stat className="w-[23px] justify-around"><Icon name="calc" className="size-[11px]" /></Stat>
        <Stat className="w-[39px] justify-around">
          <Icon name="ui" />
          <Caret />
        </Stat>
        <Stat className="w-[22px] justify-around"><Icon name="isolate" /></Stat>
      </div>
    </footer>
  );
}

function Watermarks() {
  return (
    <>
      <svg viewBox="0 0 290 140" className="pointer-events-none absolute right-[85px] bottom-[32px] h-[140px] w-[290px]" aria-hidden="true">
        <g fill="#b4b4b4">
          <text x="3" y="91" fontSize="62" fontWeight="bold" stroke="#b4b4b4" className="font-['Liberation_Sans',sans-serif]">Bai</text>
          <ellipse cx="112" cy="36" rx="11" ry="14" />
          <ellipse cx="132" cy="16" rx="10" ry="14" />
          <ellipse cx="157" cy="18" rx="11" ry="14" />
          <ellipse cx="173" cy="42" rx="11" ry="14" />
          <path d="M142 38c8 0 12 6 16 12 6 8 18 12 18 26 0 12-9 16-18 15-8-2-22-2-32 0-9 1-18-4-18-15 0-14 12-18 18-26 4-6 8-12 16-12z" />
          <text x="187" y="85" fontSize="47" fontWeight="900">经验</text>
        </g>
        <text x="142" y="83" textAnchor="middle" fontSize="38" fontWeight="bold" fill="#000" className="font-['Liberation_Sans',sans-serif]">du</text>
        <text x="8" y="127" fontSize="33" fill="#f4f4f4" stroke="#c4c4c4" strokeWidth="0.500">jingyan.bai</text>
      </svg>
      <div className="absolute right-0 bottom-0 flex h-[95px] w-[200px] items-center bg-[#212f55] text-[#dcdcdc]">
        <svg viewBox="0 0 60 95" className="h-[95px] w-[60px] shrink-0" aria-hidden="true">
          <path
            d="M15 27l7-4 4 4 4 4-6 3c-1 7 1 12 9 15 8 2 15 1 17 6 1 4-2 7-1 11l1 10h-4l-2-11-3-5c-4-1-8-1-12-2l-5 3-1 15h-5l1-8-2-13c-5-7-6-13-2-18 3-3 3-6 3-8z"
            fill="currentColor"
          />
          <path d="M26 25q12 5 28-6M25 25q0-3-2-6M30 26l-2-7M35 26q1-4-2-7M40 25q2-3 0-5M43 24l5-4" stroke="currentColor" strokeWidth="1.500" fill="none" />
        </svg>
        <div className="flex flex-col items-start pl-1">
          <span className="flex items-center text-[27px]/[36px] font-medium">
            <span className="text-[34px]/[36px] font-normal">3D</span>溜溜网
          </span>
          <span className="text-[24px]/[24px]">3D66.COM</span>
        </div>
      </div>
    </>
  );
}

export default function App() {
  return (
    <div className="relative flex h-screen flex-col overflow-hidden bg-[#555] font-['Open_Sans','Noto_Sans_CJK_SC',sans-serif] text-[10px]/[14px] text-[#ececec]">
      <header className="shrink-0">
        <div className="flex">
          <button className="flex h-8 w-[33px] shrink-0 items-center border-r border-b border-[#333] bg-[#808080] pb-[6px]" aria-label="应用程序菜单">
            <svg viewBox="0 0 24 26" className="h-[26px] w-6" aria-hidden="true">
              <path d="M1 24L9 1h6l8 22-6-1-2-6-7 2-2 6z" fill="#d8282f" />
              <path d="M12 6l2 6-5 2z" fill="#808080" />
              <path d="M1 24l7-6 7-2 8 7-6-1-4-3-7 5z" fill="#96191e" />
            </svg>
            <Caret className="w-[5px] text-[#222]" />
          </button>
          <div className="min-w-0 flex-1">
            <TitleBar />
            <MenuBar />
          </div>
        </div>
        <div className="flex h-[17px] items-end border-b border-[#333] bg-[#525252] pl-[2px] text-[#c8c8c8]">
          <button className="mr-1 h-[15px] rounded-t-sm bg-[#707070] px-[6px] text-[11px]/[14px] text-white">默认</button>
          {tabs.map((t) => (
            <button key={t} className="h-[15px] px-[9px] whitespace-nowrap">
              {t}
            </button>
          ))}
          <button className="ml-[20px] flex h-[15px] items-center gap-[6px]" aria-label="最小化功能区">
            <svg viewBox="0 0 12 7" className="h-[7px] w-3"><rect width="12" height="7" rx="2" fill="#eee" /><path d="M4 5l2-2 2 2z" fill="#333" /></svg>
            <Caret className="w-[4px]" />
          </button>
        </div>
        <Ribbon />
        <div className="h-1 border-t border-[#777] bg-[#4a4a4a]" />
      </header>

      <div className="flex min-h-0 flex-1">
        <SidePanel />
        <main className="flex min-w-0 flex-1 flex-col">
          <div className="flex h-4 shrink-0 items-stretch bg-[#eeeeee] text-black">
            <button className="flex w-[118px] items-center justify-center bg-[#fbe6e8] text-[#2a1ab0]">
              城北中学平面<span className="font-['Liberation_Mono',monospace]">11.18.t3</span>
            </button>
            <button className="flex w-[39px] items-center justify-end border-r border-[#555] pr-[5px] font-['Liberation_Mono',monospace]">
              3.25
            </button>
          </div>
          <Drawing />
          <CommandLine />
        </main>
      </div>
      <StatusBar />
      <Watermarks />
    </div>
  );
}
